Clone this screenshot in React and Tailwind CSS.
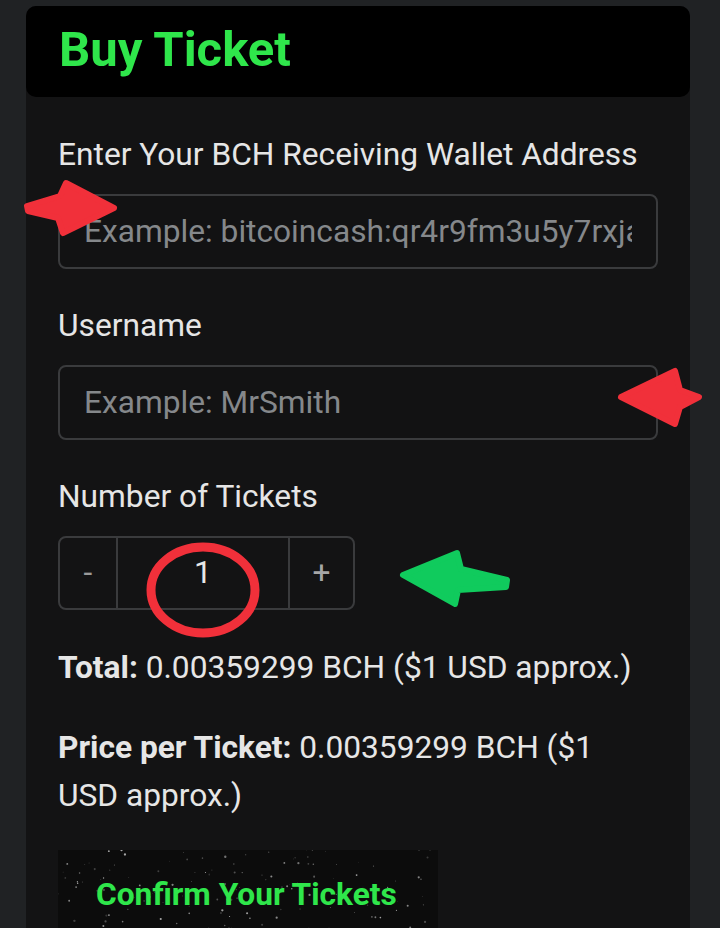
import React from 'react';

const font = { fontFamily: 'Roboto, "Noto Sans", sans-serif' };

// deterministic speckle for the button background
const dots = (() => {
  let seed = 7;
  const rnd = () => {
    seed = (seed * 9301 + 49297) % 233280;
    return seed / 233280;
  };
  const out = [];
  for (let i = 0; i < 160; i++) {
    out.push({ x: rnd() * 380, y: rnd() * 90, r: rnd() * 0.9 + 0.3, o: rnd() * 0.5 + 0.15 });
  }
  return out;
})();

const Field = ({ label, placeholder, first }) => (
  <div className={first ? '' : 'mt-[36px]'}>
    <label className="block text-[31.7px] leading-[42px] text-[#e6e6e6]">{label}</label>
    <input
      type="text"
      placeholder={placeholder}
      className="mt-[18px] block h-[75px] w-full rounded-[8px] border-2 border-[#3a3b3d] bg-[#121213] px-[24px] text-[31.7px] text-[#e6e6e6] outline-none placeholder:text-[#85888b]"
      style={font}
    />
  </div>
);

const Annotations = () => (
  <svg className="pointer-events-none absolute left-0 top-0" width="720" height="928" viewBox="0 0 720 928">
    <polygon
      points="27,206 60,196 66,183 114,208 63,233 58,218 28,211"
      fill="#f1303a"
      stroke="#f1303a"
      strokeWidth="6"
      strokeLinejoin="round"
    />
    <polygon
      points="621,397 675,371 680,390 699,397 680,407 675,424"
      fill="#f1303a"
      stroke="#f1303a"
      strokeWidth="6"
      strokeLinejoin="round"
    />
    <polygon
      points="403,575 457,553 461,569 507,580 506,587 458,590 455,604"
      fill="#10cb5d"
      stroke="#10cb5d"
      strokeWidth="6"
      strokeLinejoin="round"
    />
    <ellipse cx="203" cy="590" rx="52" ry="43" fill="none" stroke="#f1303a" strokeWidth="9" />
  </svg>
);

export default function App() {
  return (
    <div className="relative min-h-[928px] overflow-hidden bg-[#202224]" style={font}>
      <div className="ml-[26px] mt-[6px] min-h-[922px] w-[664px] rounded-t-[10px] bg-[#131314]">
        {/* Header */}
        <div className="h-[91px] rounded-[10px] bg-black pl-[33px] pt-[19px]">
          <h1 className="text-[49px] font-bold leading-[50px] text-[#2fe64b]">Buy Ticket</h1>
        </div>

        <div className="px-[32px] pt-[37px]">
          <Field
            first
            label="Enter Your BCH Receiving Wallet Address"
            placeholder="Example: bitcoincash:qr4r9fm3u5y7rxjaxyz0000000000"
          />
          <Field label="Username" placeholder="Example: MrSmith" />

          <div className="mt-[36px]">
            <label className="block text-[31.7px] leading-[42px] text-[#e6e6e6]">Number of Tickets</label>
            <div className="mt-[18px] flex h-[74px] w-[297px] rounded-[8px] border-2 border-[#3a3b3d] text-[31.7px]">
              <button className="flex w-[58px] items-center justify-center border-r-2 border-[#3a3b3d] text-[#9a9a9a]">-</button>
              <div className="flex w-[170px] items-center justify-center text-[#e8e8e8]">1</div>
              <button className="flex flex-1 items-center justify-center border-l-2 border-[#3a3b3d] text-[#a6a6a6]">+</button>
            </div>
          </div>

          <p className="mt-[34px] text-[31.7px] leading-[48px] text-[#e6e6e6]">
            <span className="font-bold">Total:</span> 0.00359299 BCH ($1 USD approx.)
          </p>
          <p className="mt-[32px] text-[31.7px] leading-[48px] text-[#e6e6e6]">
            <span className="font-bold">Price per Ticket:</span> 0.00359299 BCH ($1 USD approx.)
          </p>

          <button className="relative mt-[30px] flex h-[90px] w-[380px] items-center bg-[#0c0c0c] pl-[38px] text-left">
            <svg className="absolute left-0 top-0" width="380" height="90" viewBox="0 0 380 90">
              {dots.map((d, i) => (
                <circle key={i} cx={d.x} cy={d.y} r={d.r} fill="#ffffff" opacity={d.o} />
              ))}
            </svg>
            <span className="relative text-[31.7px] font-bold text-[#2fe64b]">Confirm Your Tickets</span>
          </button>
        </div>
      </div>
      <Annotations />
    </div>
  );
}
